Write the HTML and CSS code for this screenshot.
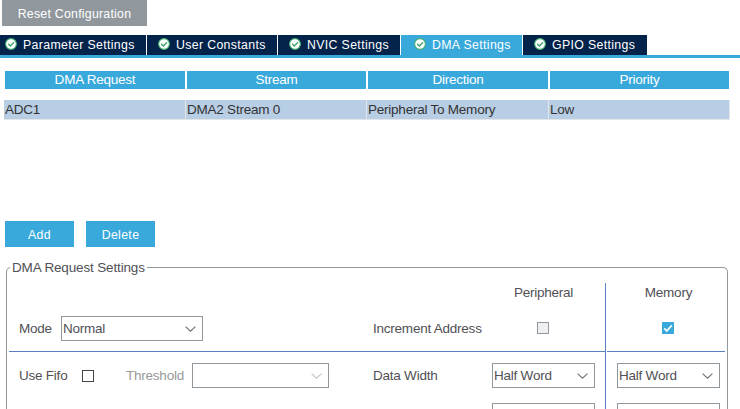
FILE: index.html
```html
<!DOCTYPE html>
<html lang="en">
<head>
<meta charset="utf-8">
<title>DMA Settings</title>
<link rel="stylesheet" href="styles.css">
</head>
<body>
<svg class="defs" aria-hidden="true">
  <symbol id="ok" viewBox="0 0 12 12"><circle cx="6" cy="6" r="5.4" fill="#fff" stroke="#3fae6c" stroke-width="1.1"/><path d="M3.2 5.8 5.3 8 9 4.2" fill="none" stroke="#3fa66a" stroke-width="1.4"/></symbol>
  <symbol id="chevron" viewBox="0 0 11 6"><path d="M.6.6 5.5 5.2 10.4.6" fill="none" stroke="currentColor" stroke-width="1.2"/></symbol>
</svg>
<button class="reset">Reset Configuration</button>
<nav class="tabs">
  <a class="tab parameter"><svg><use href="#ok"/></svg><span>Parameter Settings</span></a>
  <a class="tab user"><svg><use href="#ok"/></svg><span>User Constants</span></a>
  <a class="tab nvic"><svg><use href="#ok"/></svg><span>NVIC Settings</span></a>
  <a class="tab dma active"><svg><use href="#ok"/></svg><span>DMA Settings</span></a>
  <a class="tab gpio"><svg><use href="#ok"/></svg><span>GPIO Settings</span></a>
</nav>
<div class="table">
  <div class="head"><span>DMA Request</span><span>Stream</span><span>Direction</span><span>Priority</span></div>
  <div class="row"><span>ADC1</span><span>DMA2 Stream 0</span><span>Peripheral To Memory</span><span>Low</span></div>
</div>
<div class="actions"><button>Add</button><button>Delete</button></div>
<fieldset class="settings">
  <legend>DMA Request Settings</legend>
  <div class="columns">
    <div class="main">
      <div class="line titles"><span class="title">Peripheral</span></div>
      <div class="line first">
        <label class="mode">Mode</label>
        <div class="select wide"><span>Normal</span><svg><use href="#chevron"/></svg></div>
        <label class="increment">Increment Address</label>
        <span class="cell"><i class="check disabled"></i></span>
      </div>
      <div class="line second">
        <label class="fifo">Use Fifo</label>
        <i class="check"></i>
        <label class="threshold">Threshold</label>
        <div class="select level"><span></span><svg><use href="#chevron"/></svg></div>
        <label class="data">Data Width</label>
        <div class="select word"><span>Half Word</span><svg><use href="#chevron"/></svg></div>
      </div>
      <div class="line third"><div class="select word"></div></div>
    </div>
    <div class="memory">
      <div class="line titles"><span class="title">Memory</span></div>
      <div class="line first"><span class="cell"><i class="check checked"><svg viewBox="0 0 12 12"><path d="M2.3 6.3 4.8 9 9.8 3.2" fill="none" stroke="#fff" stroke-width="1.7"/></svg></i></span></div>
      <div class="line second"><div class="select word"><span>Half Word</span><svg><use href="#chevron"/></svg></div></div>
      <div class="line third"><div class="select word"></div></div>
    </div>
  </div>
</fieldset>
</body>
</html>
```
FILE: styles.css
```css
* { box-sizing: border-box; }
html, body { height: 409px; overflow: hidden; }
body { margin: 0; background: #fff; color: #505055; font: 13.5px/18px "Liberation Sans", Arial, sans-serif; letter-spacing: -.23px; white-space: nowrap; }
svg { display: block; flex: none; }
.defs { display: none; }
button { border: 0; border-radius: 0; padding: 1px 0 0; color: #fff; font: 12.3px/18px "Liberation Sans", Arial, sans-serif; letter-spacing: .35px; background: #39a9dc; height: 26px; }
.reset { display: block; width: 145px; margin-left: 2px; background: #90989e; letter-spacing: .26px; }
.tabs { display: flex; gap: 1px; height: 23px; margin-top: 9px; border-bottom: 3px solid #39a9dc; }
.tab { display: flex; align-items: center; gap: 6px; height: 20px; padding-left: 5px; color: #fff; background: #03234b; font-size: 12.3px; letter-spacing: .36px; }
.tab svg { width: 12px; height: 12px; margin-top: -2px; }
.tab.active { background: #39a9dc; }
.parameter { width: 146px; }
.user { width: 130px; padding-left: 11px; }
.nvic { width: 122px; padding-left: 11px; }
.dma { width: 121px; padding-left: 13px; }
.gpio { width: 124px; padding-left: 11px; }
.table { margin: 13px 10px 0 4px; }
.head { display: grid; grid-template-columns: 180px 179px 180px 179px; gap: 2px; margin-left: 1px; height: 18px; color: #fff; text-align: center; }
.head span { background: #39a9dc; }
.row { display: grid; grid-template-columns: 181px 180px 181px 180px; gap: 1px; height: 20px; margin-top: 11px; background: #e3e5e8; border-bottom: 1px solid #e3e5e8; color: #333; line-height: 19px; }
.row span { background: #b8cee5; padding-left: 1px; }
.actions { display: flex; gap: 12px; margin: 101px 0 0 5px; }
.actions button { width: 69px; }
.settings { width: 722px; height: 151px; margin: 11px 0 0 6px; padding: 0; border: 1px solid #90989e; border-bottom: 0; border-radius: 5px 5px 0 0; }
legend { height: 18px; margin-left: 3px; padding: 1px 2px 0; line-height: 17px; letter-spacing: -.15px; }
.columns { display: flex; margin: 7px 2px 0; }
.main { width: 597px; height: 126px; border-right: 1px solid #5b7fc0; }
.memory { width: 118px; margin-left: 1px; }
.line { display: flex; align-items: center; }
.titles { height: 20px; }
.title, .cell { width: 103px; margin-left: 483px; text-align: center; }
.first { height: 49px; padding-top: 3px; border-bottom: 1px solid #5b7fc0; }
.second { height: 47px; }
.third { height: 10px; padding-top: 4px; align-items: flex-start; overflow: hidden; }
.mode { width: 42px; margin-left: 10px; }
.fifo { width: 63px; margin-left: 10px; }
.threshold { width: 66px; margin-left: 32px; color: #999; }
.increment { width: 119px; margin-left: 170px; }
.data { width: 119px; margin-left: 44px; }
.first .cell { margin: 0 0 1px; }
.memory .title, .memory .cell { margin-left: 10px; }
.select { display: flex; align-items: center; justify-content: space-between; height: 25px; padding: 0 6px 0 1px; border: 1px solid #90989e; background: #fff; }
.select svg { width: 11px; height: 6px; color: #707478; }
.wide { width: 142px; }
.level { width: 137px; }
.level svg { color: #c5c8ca; }
.word { width: 103px; }
.memory .word { margin-left: 10px; }
.main .third .word { margin-left: 483px; }
.check { display: block; flex: none; width: 12px; height: 12px; border: 1px solid #444; }
.cell .check { margin: 0 0 0 45px; }
.disabled { border-color: #90989e; background: #efeff2; }
.checked { border: 0; background: #39a9dc; }
```
